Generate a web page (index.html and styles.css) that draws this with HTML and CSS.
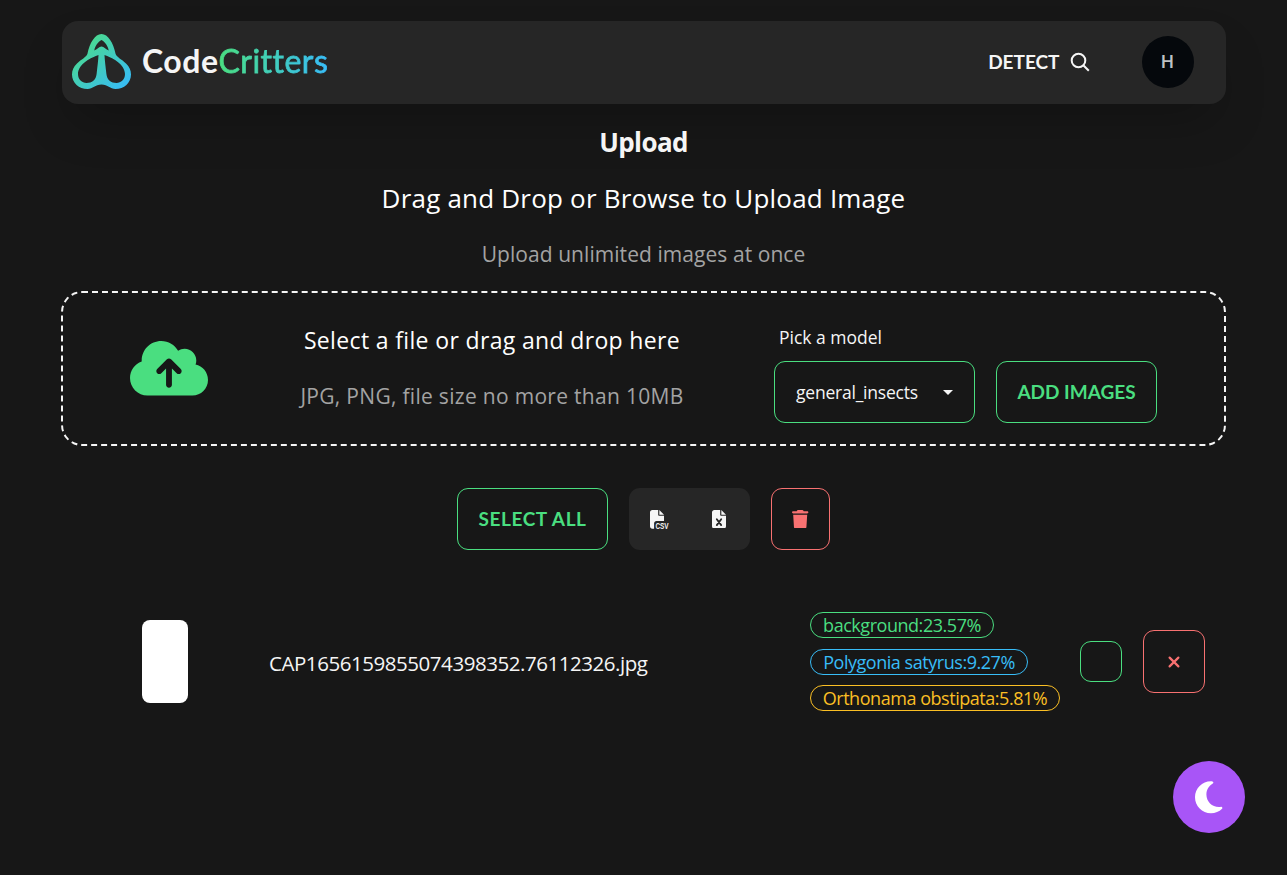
FILE: index.html
```html
<!DOCTYPE html>
<html lang="en">
<head>
<meta charset="utf-8">
<title>CodeCritters</title>
<link rel="stylesheet" href="styles.css">
</head>
<body>
<header class="navbar">
  <a class="brand">
    <svg class="brand-mark" viewBox="0 0 59 55" fill="url(#brand)" fill-rule="evenodd">
      <defs><linearGradient id="brand" gradientUnits="userSpaceOnUse" x1="14" y1="8" x2="52" y2="50"><stop offset="0" stop-color="#4ad991"/><stop offset="1" stop-color="#38bdf0"/></linearGradient></defs>
      <path d="M29.5 0C36 0 41.5 9 43.6 20C45 23.5 49.5 25 54 29.5C57.500 33 59 36 59 40.500C59 49 52 55 43.500 55C38 55 36 50.500 29.500 50.500C23 50.500 21 55 15.500 55C7 55 0 49 0 40.500C0 36 1.500 33 5 29.500C9.500 25 14 23.500 15.400 20C17.500 9 23 0 29.500 0ZM29.500 6C26 8 23 12 22.300 16.500C25 15.500 27 12.500 29.500 12.500C32 12.500 34 15.500 36.700 16.500C36 12 33 8 29.500 6ZM26.500 21C20 23 6 30 6 40C6 45.500 10 49 14.500 49C20 49 24 46 24.600 40C25.400 33 26.300 26 26.500 21ZM32.500 21C39 23 53 30 53 40C53 45.500 49 49 44.500 49C39 49 35 46 34.400 40C33.600 33 32.700 26 32.500 21Z"/>
    </svg>
    <span class="brand-name">Code<span class="brand-accent">Critters</span></span>
  </a>
  <nav class="nav-right">
    <a class="detect"><span>DETECT</span>
      <svg class="search" viewBox="0 0 20 20" fill="none" stroke="currentColor" stroke-width="2"><circle cx="8.500" cy="8.500" r="6.800"/><path d="M13.300 13.300L18.800 18.800"/></svg>
    </a>
    <span class="avatar">H</span>
  </nav>
</header>
<main class="page">
  <h1 class="title">Upload</h1>
  <p class="lead"><span>Drag and Drop or Browse to Upload Image</span></p>
  <p class="sub"><span>Upload unlimited images at once</span></p>
  <section class="dropzone">
    <svg class="cloud" viewBox="0 0 640 512" fill="currentColor"><path d="M144 480C64.500 480 0 415.500 0 336c0-62.800 40.200-116.200 96.200-135.900c-.1-2.700-.2-5.400-.2-8.100c0-88.400 71.600-160 160-160c59.300 0 111 32.200 138.700 80.200C409.900 102 428.300 96 448 96c53 0 96 43 96 96c0 12.200-2.300 23.800-6.400 34.600C596 238.400 640 290.100 640 352c0 70.700-57.300 128-128 128H144zm79-217c-9.400 9.400-9.400 24.600 0 33.900s24.600 9.400 33.900 0l39-39V392c0 13.300 10.700 24 24 24s24-10.700 24-24V257.900l39 39c9.400 9.400 24.600 9.400 33.900 0s9.400-24.600 0-33.900l-80-80c-9.400-9.400-24.600-9.400-33.900 0l-80 80z"/></svg>
    <div class="drop-text">
      <p class="drop-title">Select a file or drag and drop here</p>
      <p class="drop-note">JPG, PNG, file size no more than 10MB</p>
    </div>
    <div class="model">
      <label class="model-label">Pick a model</label>
      <div class="select"><span>general_insects</span><i class="caret"></i></div>
    </div>
    <button class="btn add"><span>ADD IMAGES</span></button>
  </section>
  <section class="toolbar">
    <button class="btn all"><span>SELECT ALL</span></button>
    <div class="exports">
      <svg class="file-csv" viewBox="0 0 512 512" fill="currentColor"><path d="M0 64C0 28.700 28.700 0 64 0H224V128c0 17.700 14.300 32 32 32H384V304H176c-35.300 0-64 28.700-64 64V512H64c-35.300 0-64-28.700-64-64V64zM384 128H256V0z"/><text class="csv" x="148" y="510" textLength="364" lengthAdjust="spacingAndGlyphs">CSV</text></svg>
      <svg class="file-xls" viewBox="0 0 384 512" fill="currentColor"><path d="M64 0C28.700 0 0 28.700 0 64V448c0 35.300 28.700 64 64 64H320c35.300 0 64-28.700 64-64V160H256c-17.700 0-32-14.300-32-32V0H64zM256 0V128H384z"/><path class="cross" d="M132 254L252 414M252 254L132 414"/></svg>
    </div>
    <button class="btn trash"><svg class="bin" viewBox="0 0 448 512" fill="currentColor"><path d="M135.200 17.700L128 32H32C14.300 32 0 46.300 0 64S14.300 96 32 96H416c17.700 0 32-14.300 32-32s-14.300-32-32-32H320l-7.200-14.300C307.400 6.800 296.300 0 284.200 0H163.800c-12.100 0-23.200 6.800-28.600 17.700zM416 128H32L53.200 467c1.600 25.300 22.600 45 47.900 45H346.900c25.300 0 46.300-19.700 47.900-45L416 128z"/></svg></button>
  </section>
  <section class="result">
    <div class="thumb"></div>
    <div class="filename"><span>CAP1656159855074398352.76112326.jpg</span></div>
    <div class="tags">
      <span class="tag tag-green"><span>background:23.57%</span></span>
      <span class="tag tag-blue"><span>Polygonia satyrus:9.27%</span></span>
      <span class="tag tag-amber"><span>Orthonama obstipata:5.81%</span></span>
    </div>
    <div class="check"></div>
    <button class="btn remove"><svg class="x" viewBox="0 0 12 12" fill="none" stroke="currentColor" stroke-width="2.200" stroke-linecap="round"><path d="M1.600 1.600L10.400 10.400M10.400 1.600L1.600 10.400"/></svg></button>
  </section>
</main>
<button class="theme"><svg class="moon" viewBox="0 0 384 512" fill="currentColor"><path d="M223.500 32C100 32 0 132.300 0 256S100 480 223.500 480c60.600 0 115.500-24.200 155.800-63.400c5-4.900 6.300-12.500 3.100-18.700s-10.100-9.700-17-8.500c-9.800 1.700-19.800 2.600-30.100 2.600c-96.900 0-175.500-78.800-175.500-176c0-65.800 36-123.100 89.300-153.300c6.100-3.500 9.200-10.500 7.700-17.300s-7.300-11.900-14.300-12.500c-6.300-.5-12.600-.8-19-.8z"/></svg></button>
</body>
</html>
```
FILE: styles.css
```css
* { box-sizing: border-box; margin: 0; }
body { height: 875px; overflow: hidden; padding: 21px 61px 0; background: #171717; color: #f5f5f5; font-family: "Open Sans", "Noto Sans", sans-serif; }
svg { display: block; flex: none; }
button { padding: 0; background: none; font: inherit; }
p, span, h1, label { white-space: nowrap; }
.navbar { display: flex; align-items: center; justify-content: space-between; height: 83px; margin: 0 .5px; padding: 0 32px 2px 10.500px; border-radius: 16px; background: #262626; box-shadow: 0 25px 50px -12px rgba(0, 0, 0, .25); }
.brand { display: flex; align-items: center; gap: 11px; }
.brand-mark { width: 59px; height: 55px; }
.brand-name { font: 700 32px/40px Lato, sans-serif; letter-spacing: .5px; margin-top: -2px; }
.brand-accent { font-weight: 400; -webkit-text-stroke: .8px transparent; background: linear-gradient(90deg, #4ade80, #38bdf8); -webkit-background-clip: text; background-clip: text; color: transparent; }
.nav-right { display: flex; align-items: center; gap: 52px; }
.detect { display: flex; align-items: center; gap: 10px; font: 700 19px/28px Lato, sans-serif; }
.search { width: 20px; height: 20px; }
.avatar { display: grid; place-items: center; width: 52px; height: 52px; border-radius: 50%; background: #05080c; color: #bfc1c3; font: 500 18px/24px Roboto, sans-serif; }
.title { margin-top: 20px; text-align: center; font: 700 26px/36px "Open Sans", sans-serif; letter-spacing: -.6px; }
.lead { margin-top: 20px; text-align: center; font-size: 26px; line-height: 36px; letter-spacing: .2px; color: #fff; }
.sub { margin-top: 24px; text-align: center; font-size: 21px; line-height: 28px; letter-spacing: .06px; color: #a3a3a3; }
.dropzone { display: grid; grid-template-columns: 171px 399px 201px 161px; height: 155px; margin-top: 23px; padding: 0 67px; border: 2px dashed #f5f5f5; border-radius: 21px; }
.cloud { width: 78px; height: 62.400px; margin-top: 44px; color: #4ade80; }
.drop-text { width: 384px; margin-left: -1px; padding-top: 33px; text-align: center; }
.drop-title { font-size: 23px; line-height: 28px; letter-spacing: .35px; color: #fff; }
.drop-note { margin-top: 28px; font-size: 21px; line-height: 28px; letter-spacing: .3px; color: #a3a3a3; }
.model { margin-left: 74px; width: 201px; }
.model-label { display: block; padding: 32px 0 0 5px; font-size: 17.500px; line-height: 24px; }
.select, .btn { display: flex; align-items: center; justify-content: center; border: 1px solid #4ade80; border-radius: 11px; color: #4ade80; }
.select { justify-content: space-between; height: 62px; margin-top: 12px; padding: 0 21px; color: #f5f5f5; font-size: 17.500px; letter-spacing: -.22px; }
.caret { border: 5px solid transparent; border-top-color: #f5f5f5; border-bottom: 0; }
.btn { height: 62px; font: 700 19px/28px Lato, sans-serif; }
.add { width: 161px; margin: 68px 0 0 95px; }
.toolbar { display: flex; justify-content: center; gap: 21px; margin-top: 42px; }
.all { width: 151px; letter-spacing: .6px; }
.exports { display: flex; align-items: center; gap: 43px; width: 121px; height: 62px; padding-left: 21px; border-radius: 11px; background: #262626; }
.file-csv { width: 18.700px; height: 18.700px; overflow: visible; }
.csv { font: 700 228px "Liberation Sans", sans-serif; }
.file-xls { width: 14px; height: 18.700px; }
.cross { fill: none; stroke: #262626; stroke-width: 50; stroke-linecap: round; }
.trash { width: 59px; border-color: #f87171; color: #f87171; }
.bin { width: 16.400px; height: 18.700px; }
.result { display: flex; align-items: center; margin-top: 62px; padding-left: 81px; }
.thumb { width: 46px; height: 83px; border-radius: 8px; background: #fff; }
.filename { width: 541px; margin-left: 81px; padding-top: 2px; font-size: 20.500px; letter-spacing: -.45px; }
.tags { display: flex; flex-direction: column; align-items: flex-start; gap: 10.500px; width: 270px; }
.tag { display: flex; align-items: center; justify-content: center; height: 26px; border: 1px solid; border-radius: 13px; font-size: 18px; letter-spacing: -.46px; }
.tag-green { width: 184px; color: #4ade80; }
.tag-blue { width: 218px; color: #38bdf8; }
.tag-amber { width: 250px; color: #fbbf24; }
.check { width: 42px; height: 41px; border: 1px solid #4ade80; border-radius: 11px; }
.remove { width: 62px; height: 63px; margin-left: 21px; border-color: #f87171; color: #f87171; }
.x { width: 12px; height: 12px; }
.theme { position: fixed; right: 42px; bottom: 42px; display: grid; place-items: center; width: 72px; height: 72px; border: 0; border-radius: 50%; background: #a855f7; color: #fff; }
.moon { width: 27.400px; height: 36.600px; }
```
